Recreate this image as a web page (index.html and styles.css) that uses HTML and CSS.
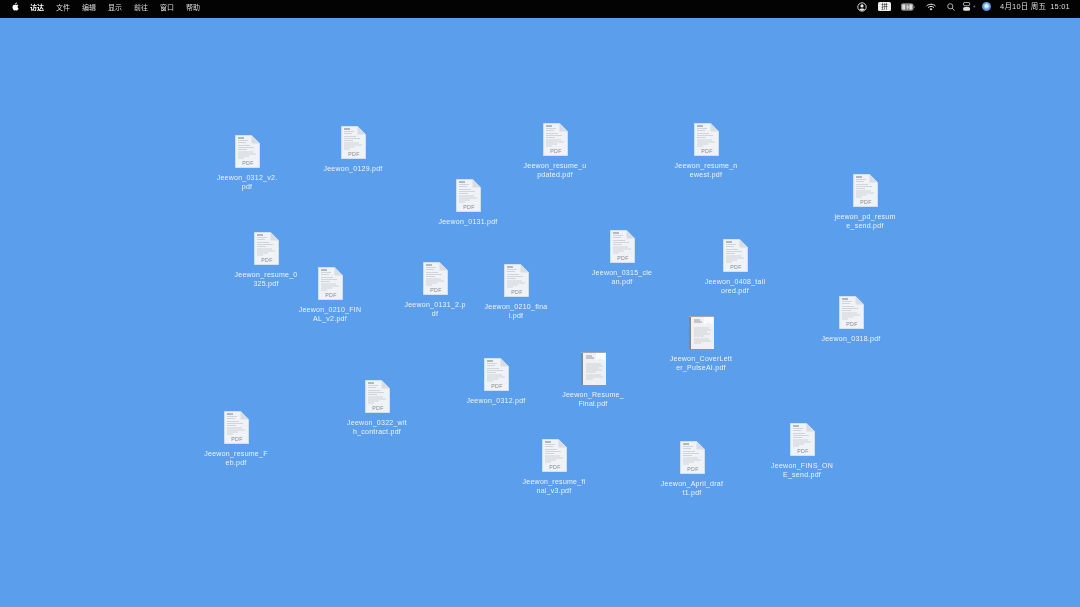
FILE: index.html
```html
<!DOCTYPE html>
<html lang="zh-CN">
  <head>
    <meta charset="UTF-8" />
    <title>Desktop</title>
    <link rel="stylesheet" href="styles.css">
  </head>
  <body>
    <svg class="defs">
      <symbol id="pdf-page" viewBox="0 0 25 33">
        <path d="M0.3 0.3H16.5L24.7 8.5V32.7H0.3Z" fill="#eff2f6" stroke="#dfe6ef" stroke-width="0.5" />
        <path d="M16.5 0.5V8.5H24.5Z" fill="#d9dde3" />
        <path d="M3 3H9" stroke="#83888e" stroke-width="1.1" />
        <path d="M3 5.5H13M3 7.5H11M3 10.5H15M3 12.5H19M3 14.5H12M3 17H18M3 19H21M3 21H14M3 23H9" stroke="#c3c8ce" stroke-width="0.7" />
        <text x="13" y="30" text-anchor="middle" class="pdf-tag">PDF</text>
      </symbol>
      <symbol id="scan-page" viewBox="0 0 25 33">
        <path d="M0 0H25V33H0Z" fill="#eef0f3" />
        <path d="M0 0H2V33H0Z" fill="#82878d" />
        <path d="M0 0H25V1H0Z" fill="#a3a8ae" />
        <path d="M15 1V9L19 6L24 9V1Z" fill="#fafbfc" />
        <path d="M5 4H11M5 6H13" stroke="#8c9197" stroke-width="0.9" />
        <path d="M5 12H20M5 14H22M5 16H18M5 18H21M5 20H15M5 23H20M5 25H22M5 27H12" stroke="#c0c5ca" stroke-width="0.7" />
      </symbol>
    </svg>

    <header class="menubar">
      <div class="menu-left">
        <svg class="apple" viewBox="0 0 14 16" width="7" height="9">
          <path fill="#fff" d="M9.6 0.2C9.7 1.3 9.3 2.2 8.7 2.9 8.1 3.7 7.1 4.2 6.2 4.1 6.1 3.1 6.6 2.1 7.1 1.5 7.7 0.8 8.8 0.2 9.6 0.2ZM12.8 5.5C11.6 6.3 11 7.3 11 8.6 11 10.1 11.9 11.2 13.2 11.8 12.8 12.8 12.4 13.7 11.7 14.6 11.1 15.4 10.5 16 9.6 16 8.7 16 8.3 15.5 7.2 15.5 6.1 15.5 5.7 16 4.8 16 3.9 16 3.2 15.3 2.6 14.4 1.2 12.4 0.4 9.3 1.5 7 2.2 5.5 3.5 4.6 4.9 4.6 5.9 4.6 6.6 5.2 7.4 5.2 8.1 5.2 8.9 4.5 10.1 4.5 11 4.5 12.1 4.8 12.8 5.5Z" />
        </svg>
        <span class="menu-item app-name">访达</span>
        <span class="menu-item">文件</span>
        <span class="menu-item">编辑</span>
        <span class="menu-item">显示</span>
        <span class="menu-item">前往</span>
        <span class="menu-item">窗口</span>
        <span class="menu-item">帮助</span>
      </div>
      <div class="menu-right">
        <svg class="status user" viewBox="0 0 10 10" width="10" height="10">
          <circle cx="5" cy="5" r="4.2" fill="none" stroke="#e8e8e8" stroke-width="0.9" />
          <circle cx="5" cy="3.9" r="1.6" fill="#e8e8e8" />
          <path d="M2.2 7.6C3 6 7 6 7.8 7.6L5 9Z" fill="#e8e8e8" />
        </svg>
        <span class="input-badge">拼</span>
        <svg class="status battery" viewBox="0 0 15 8" width="14" height="8">
          <rect x="0.4" y="0.4" width="12.6" height="7.2" rx="1.6" fill="#8d8d8d" stroke="#aaa" stroke-width="0.6" />
          <rect x="1.4" y="1.4" width="3" height="5.2" fill="#dedede" />
          <rect x="9" y="1.4" width="3" height="5.2" fill="#dedede" />
          <path d="M7.5 1.2L5.4 4.4H7L6.4 6.9L8.6 3.6H7Z" fill="#eee" />
          <rect x="13.6" y="2.8" width="1" height="2.4" fill="#777" />
        </svg>
        <svg class="status wifi" viewBox="0 0 11 8" width="10" height="8">
          <path d="M0.6 2.9C3.4 0.3 7.6 0.3 10.4 2.9M2.3 4.6C4 3 7 3 8.7 4.6" fill="none" stroke="#eee" stroke-width="1.1" />
          <path d="M5.5 7.8L3.9 6.1C4.8 5.3 6.2 5.3 7.1 6.1Z" fill="#eee" />
        </svg>
        <svg class="status search" viewBox="0 0 9 9" width="8" height="8">
          <circle cx="3.7" cy="3.7" r="2.9" fill="none" stroke="#d8d8d8" stroke-width="0.9" />
          <path d="M5.8 5.8L8.5 8.5" stroke="#d8d8d8" stroke-width="1" />
        </svg>
        <svg class="status control" viewBox="0 0 13 9" width="13" height="9">
          <rect x="0.4" y="0.4" width="6.4" height="3.4" rx="1.7" fill="none" stroke="#ddd" stroke-width="0.8" />
          <rect x="0" y="5" width="7.2" height="3.8" rx="1.9" fill="#ddd" />
          <circle cx="11.4" cy="4.5" r="1" fill="#4a63c9" />
        </svg>
        <span class="siri"></span>
        <span class="clock">
          <span>4月10日 周五</span>
          <span>15:01</span>
        </span>
      </div>
    </header>

    <main class="desktop">
      <div class="file f-0312-v2"><svg class="page"><use href="#pdf-page" /></svg><span class="name">Jeewon_0312_v2.<br>pdf</span></div>
      <div class="file f-0129"><svg class="page"><use href="#pdf-page" /></svg><span class="name">Jeewon_0129.pdf</span></div>
      <div class="file f-updated"><svg class="page"><use href="#pdf-page" /></svg><span class="name">Jeewon_resume_u<br>pdated.pdf</span></div>
      <div class="file f-newest"><svg class="page"><use href="#pdf-page" /></svg><span class="name">Jeewon_resume_n<br>ewest.pdf</span></div>
      <div class="file f-send"><svg class="page"><use href="#pdf-page" /></svg><span class="name">jeewon_pd_resum<br>e_send.pdf</span></div>
      <div class="file f-0131"><svg class="page"><use href="#pdf-page" /></svg><span class="name">Jeewon_0131.pdf</span></div>
      <div class="file f-0325"><svg class="page"><use href="#pdf-page" /></svg><span class="name">Jeewon_resume_0<br>325.pdf</span></div>
      <div class="file f-final-v2"><svg class="page"><use href="#pdf-page" /></svg><span class="name">Jeewon_0210_FIN<br>AL_v2.pdf</span></div>
      <div class="file f-0131-2"><svg class="page"><use href="#pdf-page" /></svg><span class="name">Jeewon_0131_2.p<br>df</span></div>
      <div class="file f-0210"><svg class="page"><use href="#pdf-page" /></svg><span class="name">Jeewon_0210_fina<br>l.pdf</span></div>
      <div class="file f-0315"><svg class="page"><use href="#pdf-page" /></svg><span class="name">Jeewon_0315_cle<br>an.pdf</span></div>
      <div class="file f-0408"><svg class="page"><use href="#pdf-page" /></svg><span class="name">Jeewon_0408_tail<br>ored.pdf</span></div>
      <div class="file f-0318"><svg class="page"><use href="#pdf-page" /></svg><span class="name">Jeewon_0318.pdf</span></div>
      <div class="file f-cover"><svg class="page"><use href="#scan-page" /></svg><span class="name">Jeewon_CoverLett<br>er_PulseAI.pdf</span></div>
      <div class="file f-final"><svg class="page"><use href="#scan-page" /></svg><span class="name">Jeewon_Resume_<br>Final.pdf</span></div>
      <div class="file f-0312"><svg class="page"><use href="#pdf-page" /></svg><span class="name">Jeewon_0312.pdf</span></div>
      <div class="file f-0322"><svg class="page"><use href="#pdf-page" /></svg><span class="name">Jeewon_0322_wit<br>h_contract.pdf</span></div>
      <div class="file f-feb"><svg class="page"><use href="#pdf-page" /></svg><span class="name">Jeewon_resume_F<br>eb.pdf</span></div>
      <div class="file f-v3"><svg class="page"><use href="#pdf-page" /></svg><span class="name">Jeewon_resume_fi<br>nal_v3.pdf</span></div>
      <div class="file f-april"><svg class="page"><use href="#pdf-page" /></svg><span class="name">Jeewon_April_draf<br>t1.pdf</span></div>
      <div class="file f-fins"><svg class="page"><use href="#pdf-page" /></svg><span class="name">Jeewon_FINS_ON<br>E_send.pdf</span></div>
    </main>
  </body>
</html>
```

FILE: styles.css
```css
html,
body {
  height: 100%;
}
body {
  margin: 0;
  overflow: hidden;
  display: flex;
  flex-direction: column;
  background: #5b9fec;
  font-family: "Liberation Sans", "Noto Sans CJK SC", sans-serif;
  color: #fff;
}
.defs {
  display: none;
}

/* menu bar */
.menubar {
  height: 13px;
  flex: none;
  background: #030303;
  display: flex;
  align-items: center;
  justify-content: space-between;
  padding: 0 10px 5px 12px;
  font-size: 7px;
  color: #dcdcdc;
}
.menu-left,
.menu-right {
  filter: blur(0.25px);
}
.menu-left {
  display: flex;
  align-items: center;
  gap: 12px;
}
.apple {
  margin-right: -1px;
}
.app-name {
  font-weight: 700;
  color: #fff;
}
.menu-right {
  display: flex;
  align-items: center;
}
.status {
  display: block;
  flex: none;
}
.user {
  margin-right: 11px;
}
.input-badge {
  width: 13px;
  height: 9px;
  line-height: 9px;
  text-align: center;
  background: #eee;
  color: #111;
  border-radius: 1.5px;
  font-size: 6.5px;
  margin-right: 10px;
}
.battery {
  margin-right: 11px;
}
.wifi {
  margin-right: 11px;
}
.search {
  margin-right: 8px;
}
.control {
  margin-right: 6px;
}
.siri {
  width: 9px;
  height: 9px;
  border-radius: 50%;
  background: radial-gradient(circle at 50% 45%, #e8f4ff 0 15%, #58b6e8 45%, #8d5cc8 75%, #2c3c70 100%);
  margin-right: 9px;
}
.clock {
  display: flex;
  align-items: baseline;
  gap: 4px;
  font-size: 7.5px;
  line-height: 10px;
  letter-spacing: 0.2px;
  white-space: nowrap;
}

/* desktop files */
.desktop {
  flex: 1;
  position: relative;
}
.file {
  position: absolute;
  width: 80px;
  display: flex;
  flex-direction: column;
  align-items: center;
  gap: 5px;
}
.page {
  width: 25px;
  height: 33px;
  display: block;
  filter: blur(0.35px);
}
.pdf-tag {
  font: 5.2px "Liberation Sans", sans-serif;
  fill: #85898e;
  letter-spacing: 0.3px;
}
.name {
  font-size: 7px;
  line-height: 9px;
  letter-spacing: 0.26px;
  text-align: center;
  white-space: nowrap;
  color: #eef3fb;
  filter: blur(0.3px);
}

/* icon spots on the desktop, top is measured below the 18px bar */
.f-0312-v2 { left: 207px; top: 117px; }
.f-0129 { left: 313px; top: 108px; }
.f-updated { left: 515px; top: 105px; }
.f-newest { left: 666px; top: 105px; }
.f-send { left: 825px; top: 156px; }
.f-0131 { left: 428px; top: 161px; }
.f-0325 { left: 226px; top: 214px; }
.f-final-v2 { left: 290px; top: 249px; }
.f-0131-2 { left: 395px; top: 244px; }
.f-0210 { left: 476px; top: 246px; }
.f-0315 { left: 582px; top: 212px; }
.f-0408 { left: 695px; top: 221px; }
.f-0318 { left: 811px; top: 278px; }
.f-cover { left: 661px; top: 298px; }
.f-final { left: 553px; top: 334px; }
.f-0312 { left: 456px; top: 340px; }
.f-0322 { left: 337px; top: 362px; }
.f-feb { left: 196px; top: 393px; }
.f-v3 { left: 514px; top: 421px; }
.f-april { left: 652px; top: 423px; }
.f-fins { left: 762px; top: 405px; }
```
